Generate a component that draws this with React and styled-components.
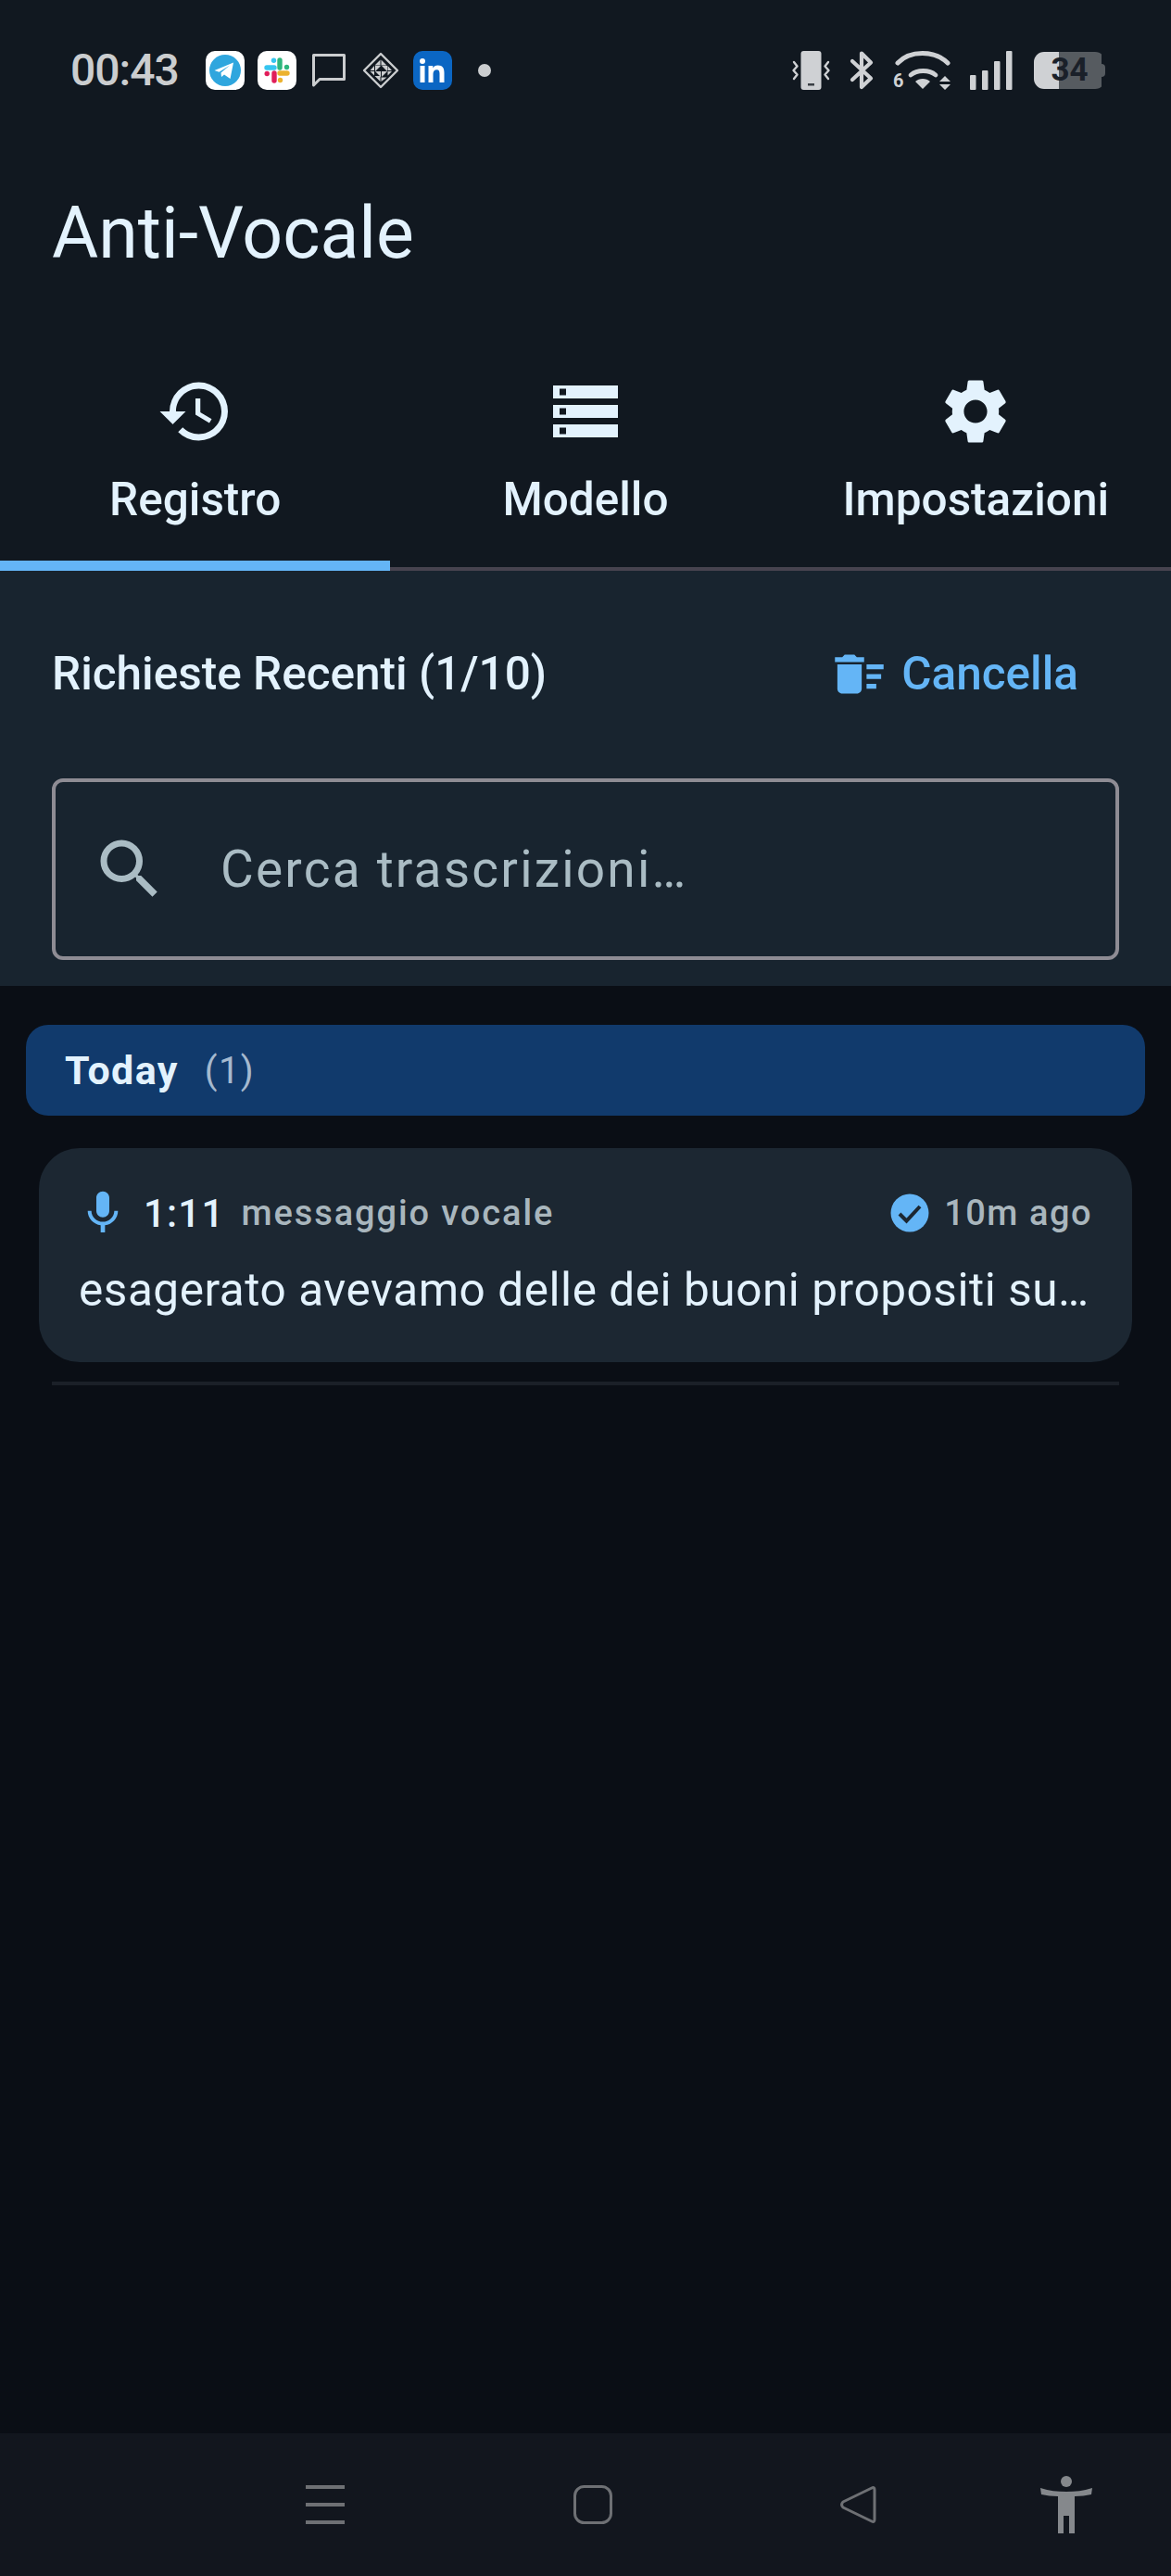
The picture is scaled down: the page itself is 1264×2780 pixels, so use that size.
import React from 'react';
import styled, {createGlobalStyle} from 'styled-components';

// ========== Styled Components ========== //
const GlobalStyle = createGlobalStyle`
	* {
		box-sizing: border-box;
	}
	body {
		margin: 0;
		background-color: #0a0e15;
		font-family: Roboto, "Liberation Sans", sans-serif;
	}
`;

const Screen = styled.main`
	width: 1264px;
	height: 2780px;
	display: flex;
	flex-direction: column;
	background-color: #0a0e15;
	color: #e3f2fd;
`;

const TopArea = styled.header`
	background-color: #111820;
`;

const StatusBar = styled.div`
	height: 152px;
	padding: 55px 71px 0 76px;
	display: flex;
	justify-content: space-between;
	align-items: flex-start;
`;

const StatusGroup = styled.div`
	display: flex;
	align-items: center;
	height: 42px;
`;

const Clock = styled.span`
	width: 146px;
	font-size: 48px;
	line-height: 42px;
	font-weight: 500;
	color: #cbcdcf;
	letter-spacing: -1px;
`;

const AppIcon = styled.span`
	width: 42px;
	height: 42px;
	margin-right: ${props => props.$gap ?? 14}px;
	display: flex;
	align-items: center;
	justify-content: center;
	flex-shrink: 0;
	border-radius: 10px;
	background-color: ${props => props.$bg};
`;

const PlainIcon = styled.svg`
	display: block;
	flex-shrink: 0;
	margin-right: ${props => props.$gap ?? 0}px;
`;

const Dot = styled.span`
	width: 14px;
	height: 14px;
	margin-left: 28px;
	border-radius: 50%;
	background-color: #cbcdcf;
`;

const WifiWrap = styled.span`
	position: relative;
	display: block;
	width: 64px;
	height: 42px;
	margin-right: 19px;
	flex-shrink: 0;
`;

const WifiBadge = styled.span`
	position: absolute;
	left: 0;
	bottom: 0;
	font-size: 20px;
	line-height: 20px;
	font-weight: 700;
	color: #cfd1d4;
`;

const Battery = styled.span`
	position: relative;
	width: 77px;
	height: 40px;
	border-radius: 11px;
	display: flex;
	align-items: center;
	justify-content: center;
	font-size: 35px;
	line-height: 40px;
	font-weight: 700;
	color: #1a2029;
	background: linear-gradient(90deg, #cfd1d4 0 27px, #565b60 27px 73px, transparent 73px);
	&::after {
		content: '';
		position: absolute;
		right: 0;
		top: 13px;
		width: 5px;
		height: 14px;
		border-radius: 0 4px 4px 0;
		background-color: #565b60;
	}
`;

const Title = styled.h1`
	margin: 0;
	padding-left: 56px;
	height: 200px;
	font-size: 77px;
	line-height: 200px;
	font-weight: 400;
`;

const Tabs = styled.nav`
	display: grid;
	grid-template-columns: repeat(3, 1fr);
	height: 264px;
`;

const Tab = styled.div`
	display: flex;
	flex-direction: column;
	align-items: center;
	padding-top: 50px;
	border-bottom: ${props => props.$active ? '11px solid #64b5f6' : '4px solid #47434f'};
`;

const TabIcon = styled.svg`
	width: 84px;
	height: 84px;
	display: block;
	flex-shrink: 0;
`;

const TabLabel = styled.span`
	margin-top: 23px;
	font-size: 49.5px;
	line-height: 60px;
	font-weight: 500;
`;

const Panel = styled.section`
	background-color: #18242f;
	padding: 0 56px;
	height: 448px;
`;

const PanelHead = styled.div`
	height: 222px;
	margin-bottom: 2px;
	display: flex;
	justify-content: space-between;
	align-items: center;
`;

const PanelTitle = styled.h2`
	margin: 0;
	font-size: 49.5px;
	font-weight: 500;
`;

const ClearButton = styled.button`
	display: flex;
	align-items: center;
	gap: 14px;
	margin-right: 44px;
	padding: 0;
	border: none;
	background: none;
	color: #64b5f6;
	font-family: inherit;
	font-size: 49.5px;
	font-weight: 500;
`;

const SearchBox = styled.div`
	height: 196px;
	display: flex;
	align-items: center;
	padding-left: 38px;
	gap: 56px;
	border: 4px solid #8e8c94;
	border-radius: 12px;
`;

const SearchInput = styled.input`
	flex: 1;
	min-width: 0;
	padding: 0;
	background: none;
	border: none;
	outline: none;
	font-family: inherit;
	font-size: 55px;
	letter-spacing: 2.2px;
	color: #e3f2fd;
	&::placeholder {
		color: #aabcc4;
		opacity: 1;
	}
`;

const List = styled.section`
	flex: 1;
	padding: 42px 28px 0;
`;

const GroupHeader = styled.div`
	height: 98px;
	display: flex;
	align-items: center;
	gap: 28px;
	padding-left: 42px;
	border-radius: 24px;
	background-color: #113a6c;
`;

const GroupTitle = styled.span`
	font-size: 43px;
	font-weight: 700;
	letter-spacing: 1.4px;
`;

const GroupCount = styled.span`
	font-size: 40px;
	color: #a5b9cf;
	letter-spacing: 1.4px;
`;

const Card = styled.article`
	margin: 35px 14px 0;
	height: 231px;
	padding: 40px 43px 0 41px;
	border-radius: 44px;
	background-color: #1c2732;
`;

const CardMeta = styled.div`
	display: flex;
	align-items: center;
	height: 60px;
`;

const Duration = styled.span`
	margin-left: 16px;
	font-size: 42px;
	font-weight: 500;
	letter-spacing: 1.2px;
`;

const Caption = styled.span`
	margin-left: 18px;
	flex: 1;
	font-size: 38px;
	font-weight: 500;
	letter-spacing: 1.9px;
	color: #a9b6bd;
`;

const Ago = styled.span`
	margin-left: 13px;
	font-size: 38px;
	font-weight: 500;
	letter-spacing: 1.5px;
	color: #a9b6bd;
`;

const Transcript = styled.p`
	margin: 23px 0 0 2px;
	font-size: 49.5px;
	line-height: 60px;
	letter-spacing: 0.55px;
	white-space: nowrap;
`;

const Divider = styled.hr`
	margin: 21px 28px 0;
	height: 4px;
	border: none;
	background-color: #1b2028;
`;

const NavBar = styled.footer`
	height: 154px;
	display: flex;
	align-items: center;
	padding-left: 330px;
	background-color: #12161e;
`;

const NavSlot = styled.svg`
	display: block;
	flex-shrink: 0;
	margin-right: ${props => props.$gap ?? 0}px;
`;

// ========== Icons ========== //
const TelegramIcon = () => (
	<svg width="34" height="34" viewBox="0 0 34 34">
		<circle cx="17" cy="17" r="17" fill="#2fa6de"/>
		<path d="M5.500 17 L26 8.500 L22.500 26 L16 21.500 L13 24 L12.500 19.500 L22 11.500 L10.500 18.800 Z" fill="#fff"/>
	</svg>
);

const SlackIcon = () => (
	<svg width="28" height="28" viewBox="0 0 28 28" fill="none" strokeWidth="5.4" strokeLinecap="round">
		<path d="M3 11H11" stroke="#36c5f0"/>
		<path d="M10.500 3.200V3.200" stroke="#36c5f0"/>
		<path d="M17 3V11" stroke="#2eb67d"/>
		<path d="M24.500 10.500V10.500" stroke="#2eb67d"/>
		<path d="M17 17H25" stroke="#ecb22e"/>
		<path d="M17.500 24.500V24.500" stroke="#ecb22e"/>
		<path d="M11 17V25" stroke="#e01e5a"/>
		<path d="M3.200 17.500V17.500" stroke="#e01e5a"/>
	</svg>
);

const MessageIcon = () => (
	<PlainIcon $gap={18} width="36" height="38" viewBox="0 0 36 38" fill="none">
		<path d="M1.500 2.500H34.500V28.500H8L1.500 35Z" stroke="#cbcdcf" strokeWidth="3" strokeLinejoin="round"/>
	</PlainIcon>
);

const DiamondIcon = () => (
	<PlainIcon $gap={15} width="40" height="40" viewBox="0 0 40 40" fill="none">
		<path d="M20 2L38 20L20 38L2 20Z" stroke="#cbcdcf" strokeWidth="2.400" strokeLinejoin="round"/>
		<path d="M19.500 8.500V14.500H13.500ZM20.500 8.500L26.500 14.500H20.500ZM13 15V20H8.500ZM14 15H20L14 21ZM21 15H27V21ZM27.500 15L32 20H27.500ZM8.500 21H13V25.500ZM14 21H20V27ZM21 21L27 21L21 27ZM27.500 21H32L27.500 25.500ZM13.500 26H19.500V32ZM20.500 27.500H26.500L20.500 32Z" fill="#cbcdcf"/>
	</PlainIcon>
);

const LinkedinIcon = () => (
	<svg width="28" height="26" viewBox="0 0 28 26" fill="#fff">
		<circle cx="3" cy="3" r="3"/>
		<rect x="0.500" y="8" width="5" height="18"/>
		<path d="M9.500 8H14.300V10.400C15.200 8.800 17 7.600 19.600 7.600C25 7.600 26.500 10.800 26.500 15.600V26H21.500V16.600C21.500 14.200 21 12.200 18.500 12.200C15.800 12.200 14.500 14 14.500 16.800V26H9.500Z"/>
	</svg>
);

const VibrateIcon = () => (
	<PlainIcon $gap={20} width="43" height="42" viewBox="0 0 43 42" fill="none">
		<rect x="10.500" y="0" width="22" height="42" rx="3" fill="#cfd1d4"/>
		<rect x="18" y="35" width="7" height="2.500" fill="#3a3f45"/>
		<path d="M3 12L6.500 16.500L2.500 21L6.500 25.500L3 30M40 12L36.500 16.500L40.500 21L36.500 25.500L40 30" stroke="#cfd1d4" strokeWidth="2.400" strokeLinecap="round" strokeLinejoin="round"/>
	</PlainIcon>
);

const BluetoothIcon = () => (
	<PlainIcon $gap={20} width="27" height="44" viewBox="0 0 27 44" fill="none">
		<path d="M3 12L23 30.500L13 40V3.500L23 13.500L3 32" stroke="#cfd1d4" strokeWidth="4.200" strokeLinejoin="round" strokeLinecap="round"/>
	</PlainIcon>
);

const WifiIcon = () => (
	<WifiWrap>
		<PlainIcon width="64" height="42" viewBox="0 0 64 42" fill="none">
			<path d="M5 13C18 -1 45 -1 59 13" stroke="#cfd1d4" strokeWidth="5" strokeLinecap="round"/>
			<path d="M19 26C26 20 39 20 46 26" stroke="#cfd1d4" strokeWidth="4.800" strokeLinecap="round"/>
			<path d="M24 33C28 29 36 29 40 33L32 41Z" fill="#cfd1d4"/>
			<path d="M56 27L62 33H50ZM56 42L50 36H62Z" fill="#cfd1d4"/>
		</PlainIcon>
		<WifiBadge>6</WifiBadge>
	</WifiWrap>
);

const SignalIcon = () => (
	<PlainIcon $gap={23} width="46" height="42" viewBox="0 0 46 42" fill="#cfd1d4">
		<rect x="0" y="26" width="6.500" height="16" rx="1"/>
		<rect x="13" y="21" width="6.500" height="21" rx="1"/>
		<rect x="26" y="11" width="6.500" height="31" rx="1"/>
		<rect x="39" y="0" width="6.500" height="42" rx="1"/>
	</PlainIcon>
);

const HistoryIcon = () => (
	<TabIcon viewBox="0 0 24 24" fill="#e3f2fd">
		<path d="M13 3a9 9 0 0 0-9 9H1l3.890 3.890.07.140L9 12H6c0-3.870 3.130-7 7-7s7 3.130 7 7-3.130 7-7 7c-1.930 0-3.680-.790-4.940-2.060l-1.420 1.420A8.954 8.954 0 0 0 13 21a9 9 0 0 0 0-18zm-1 5v5l4.280 2.540.720-1.210-3.500-2.080V8H12z"/>
	</TabIcon>
);

const StorageIcon = () => (
	<TabIcon viewBox="0 0 24 24" fill="#e3f2fd">
		<path d="M2 20h20v-4H2v4zm2-3h2v2H4v-2zM2 4v4h20V4H2zm4 3H4V5h2v2zm-4 7h20v-4H2v4zm2-3h2v2H4v-2z"/>
	</TabIcon>
);

const SettingsIcon = () => (
	<TabIcon viewBox="0 0 24 24" fill="#e3f2fd">
		<path d="M19.140 12.940c.040-.300.060-.610.060-.940 0-.320-.020-.640-.070-.940l2.030-1.580a.49.49 0 0 0 .120-.610l-1.920-3.320a.488.488 0 0 0-.590-.220l-2.390.960c-.500-.380-1.030-.700-1.620-.940l-.360-2.540a.484.484 0 0 0-.480-.410h-3.840c-.240 0-.430.170-.470.410l-.360 2.540c-.590.240-1.130.570-1.620.940l-2.390-.960c-.220-.080-.470 0-.590.220L2.740 8.870c-.120.210-.080.470.120.610l2.030 1.580c-.050.300-.090.630-.090.940s.020.640.070.940l-2.030 1.580a.49.49 0 0 0-.120.610l1.920 3.320c.120.220.370.290.590.220l2.390-.960c.500.380 1.030.700 1.620.940l.360 2.540c.050.240.240.410.480.410h3.840c.240 0 .440-.170.470-.410l.360-2.540c.590-.240 1.130-.560 1.620-.940l2.390.960c.220.080.470 0 .590-.220l1.920-3.320c.120-.220.070-.470-.120-.610l-2.010-1.580zM12 15.600c-1.980 0-3.600-1.620-3.600-3.600s1.620-3.600 3.600-3.600 3.600 1.620 3.600 3.600-1.620 3.600-3.600 3.600z"/>
	</TabIcon>
);

const DeleteSweepIcon = () => (
	<svg width="63" height="63" viewBox="0 0 24 24" fill="#64b5f6">
		<path d="M15 16h4v2h-4zm0-8h7v2h-7zm0 4h6v2h-6zM3 18c0 1.100.900 2 2 2h6c1.100 0 2-.900 2-2V8H3v10zM14 5h-3l-1-1H6L5 5H2v2h12z"/>
	</svg>
);

const SearchIcon = () => (
	<svg width="84" height="84" viewBox="0 0 24 24" fill="#aabcc4">
		<path d="M15.500 14h-.790l-.280-.270A6.471 6.471 0 0 0 16 9.500 6.500 6.500 0 1 0 9.500 16c1.610 0 3.090-.590 4.230-1.570l.270.280v.790l5 4.990L20.490 19l-4.990-5zm-6 0C7.010 14 5 11.990 5 9.500S7.010 5 9.500 5 14 7.010 14 9.500 11.990 14 9.500 14z"/>
	</svg>
);

const MicIcon = () => (
	<svg width="56" height="56" viewBox="0 0 24 24" fill="#64b5f6">
		<path d="M12 14c1.660 0 2.990-1.340 2.990-3L15 5c0-1.660-1.340-3-3-3S9 3.340 9 5v6c0 1.660 1.340 3 3 3zm5.300-3c0 3-2.540 5.100-5.300 5.100S6.700 14 6.700 11H5c0 3.410 2.720 6.230 6 6.720V21h2v-3.280c3.280-.480 6-3.300 6-6.720h-1.700z"/>
	</svg>
);

const CheckIcon = () => (
	<svg width="48" height="48" viewBox="0 0 48 48">
		<circle cx="24" cy="24" r="20.500" fill="#64b5f6"/>
		<path d="M13 25L20.500 32.500L35 17" fill="none" stroke="#1c2732" strokeWidth="4"/>
	</svg>
);

// ========== React Function Component ========== //
const App = () => {
	return (
		<Screen>
			<GlobalStyle/>

			<TopArea>
				<StatusBar>
					<StatusGroup>
						<Clock>00:43</Clock>
						<AppIcon $bg="#fff"><TelegramIcon/></AppIcon>
						<AppIcon $bg="#fff" $gap={17}><SlackIcon/></AppIcon>
						<MessageIcon/>
						<DiamondIcon/>
						<AppIcon $bg="#0b66c3" $gap={0}><LinkedinIcon/></AppIcon>
						<Dot/>
					</StatusGroup>
					<StatusGroup>
						<VibrateIcon/>
						<BluetoothIcon/>
						<WifiIcon/>
						<SignalIcon/>
						<Battery>34</Battery>
					</StatusGroup>
				</StatusBar>

				<Title>Anti-Vocale</Title>

				<Tabs>
					<Tab $active>
						<HistoryIcon/>
						<TabLabel>Registro</TabLabel>
					</Tab>
					<Tab>
						<StorageIcon/>
						<TabLabel>Modello</TabLabel>
					</Tab>
					<Tab>
						<SettingsIcon/>
						<TabLabel>Impostazioni</TabLabel>
					</Tab>
				</Tabs>
			</TopArea>

			<Panel>
				<PanelHead>
					<PanelTitle>Richieste Recenti (1/10)</PanelTitle>
					<ClearButton>
						<DeleteSweepIcon/>
						Cancella
					</ClearButton>
				</PanelHead>
				<SearchBox>
					<SearchIcon/>
					<SearchInput placeholder="Cerca trascrizioni…"/>
				</SearchBox>
			</Panel>

			<List>
				<GroupHeader>
					<GroupTitle>Today</GroupTitle>
					<GroupCount>(1)</GroupCount>
				</GroupHeader>
				<Card>
					<CardMeta>
						<MicIcon/>
						<Duration>1:11</Duration>
						<Caption>messaggio vocale</Caption>
						<CheckIcon/>
						<Ago>10m ago</Ago>
					</CardMeta>
					<Transcript>esagerato avevamo delle dei buoni propositi su…</Transcript>
				</Card>
				<Divider/>
			</List>

			<NavBar>
				<NavSlot $gap={247} width="42" height="42" viewBox="0 0 42 42" fill="#6e7074">
					<rect y="0" width="42" height="4"/>
					<rect y="19" width="42" height="4"/>
					<rect y="38" width="42" height="4"/>
				</NavSlot>
				<NavSlot $gap={245} width="42" height="42" viewBox="0 0 42 42" fill="none">
					<rect x="1.500" y="1.500" width="39" height="39" rx="10" stroke="#6e7074" strokeWidth="3"/>
				</NavSlot>
				<NavSlot $gap={177} width="40" height="42" viewBox="0 0 40 42" fill="none">
					<path d="M35 3Q38 1.500 38 5V37Q38 40.500 35 39L4 24Q1 21 4 18Z" stroke="#6e7074" strokeWidth="3" strokeLinejoin="round"/>
				</NavSlot>
				<NavSlot width="56" height="62" viewBox="0 0 56 62" fill="#85888c">
					<ellipse cx="28" cy="6" rx="6" ry="6"/>
					<path d="M0 13C10 16 18 17 28 17C38 17 46 16 56 13L55 20C49 21 44 22 37 22V62H31V43H25V62H19V22C12 22 7 21 1 20Z"/>
				</NavSlot>
			</NavBar>
		</Screen>
	);
}

export default App;
